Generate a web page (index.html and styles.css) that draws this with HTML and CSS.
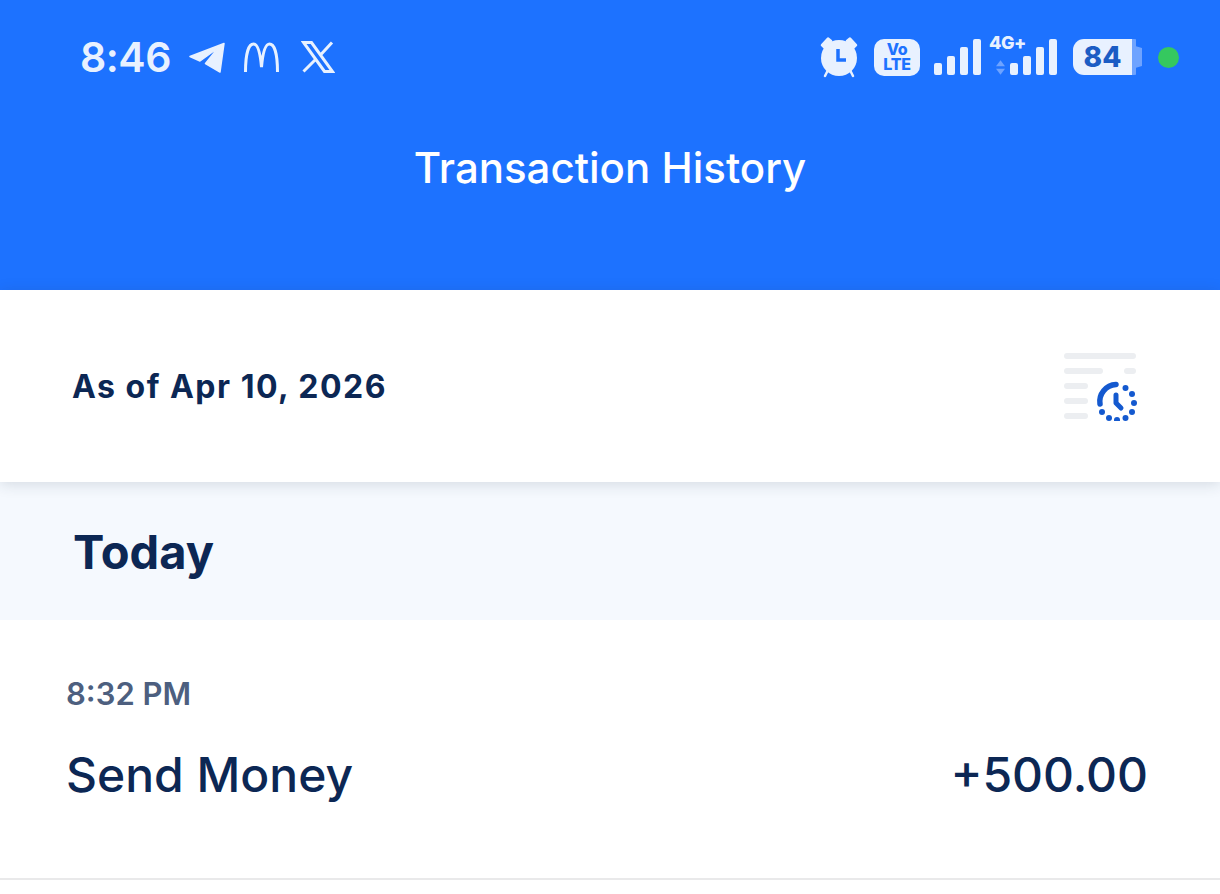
FILE: index.html
```
<!DOCTYPE html>
<html lang="en">
<head>
<meta charset="utf-8">
<title>Transaction History</title>
<link rel="stylesheet" href="styles.css">
</head>
<body>
<header class="header">
  <div class="status">
    <div class="status-left">
      <span class="clock">8:46</span>
      <svg class="ic-tg" viewBox="0 0 36 31"><path d="M35 1.500 1 14.500 11 19 29 6 16.500 21.500 31 30Z" fill="#e8f1ff" stroke="#e8f1ff" stroke-width="1.500" stroke-linejoin="round"/></svg>
      <svg class="ic-m" viewBox="0 0 36 30"><path d="M2 30C2 12 5 2 10 2 15 2 17 14 18 25 19 14 21 2 26 2 31 2 34 12 34 30" fill="none" stroke="#e8f1ff" stroke-width="3"/></svg>
      <svg class="ic-x" viewBox="0 0 34 32"><path d="M2.500 1.500H10.500L31.500 30.500H23.500ZM31 1.500 19 14.500M14.500 18.500 2.500 30.500" fill="none" stroke="#e8f1ff" stroke-width="3"/></svg>
    </div>
    <div class="status-right">
      <svg class="ic-alarm" viewBox="0 0 38 42"><path d="M2 9 8 2.500 11 5 5 12ZM36 9 30 2.500 27 5 33 12ZM8 34 5 40M30 34 33 40" fill="#e8f1ff" stroke="#e8f1ff" stroke-width="2.500" stroke-linecap="round" stroke-linejoin="round"/><circle cx="19" cy="22" r="18" fill="#e8f1ff"/><path d="M18 13V24H26" fill="none" stroke="#1d72ff" stroke-width="3.500"/></svg>
      <div class="volte"><span>Vo</span><span>LTE</span></div>
      <div class="bars bars-one"><i class="b1"></i><i class="b2"></i><i class="b3"></i><i class="b4"></i></div>
      <div class="net">
        <span class="net-label">4G+</span>
        <div class="net-row">
          <svg class="ic-updown" viewBox="0 0 10 16"><path d="M5 0 10 6.500H0Z" fill="#6ea3ff"/><path d="M5 16 10 9.500H0Z" fill="#6ea3ff"/></svg>
          <div class="bars"><i class="b1"></i><i class="b2"></i><i class="b3"></i><i class="b4"></i></div>
        </div>
      </div>
      <div class="battery"><span class="battery-body">84</span><span class="battery-cap"></span></div>
      <span class="dot"></span>
    </div>
  </div>
  <h1 class="title">Transaction History</h1>
</header>
<section class="asof">
  <span class="asof-text">As of Apr 10, 2026</span>
  <svg class="ic-hist" viewBox="0 0 74 68">
    <g fill="#eceef1">
      <rect x="0" y="0" width="72" height="6" rx="3"/>
      <rect x="0" y="15" width="39" height="6" rx="3"/>
      <rect x="60" y="15" width="12" height="6" rx="3"/>
      <rect x="0" y="30" width="24" height="6" rx="3"/>
      <rect x="0" y="45" width="24" height="6" rx="3"/>
      <rect x="0" y="60" width="24" height="6" rx="3"/>
    </g>
    <path d="M36 51A17 17 0 0 1 52 31.500" fill="none" stroke="#1459cf" stroke-width="5.500" stroke-linecap="round"/>
    <path d="M52 42V50L57 55" fill="none" stroke="#1459cf" stroke-width="5" stroke-linecap="round" stroke-linejoin="round"/>
    <g fill="#1459cf">
      <circle cx="61.500" cy="35" r="3"/><circle cx="68" cy="41" r="3"/><circle cx="70" cy="50" r="3"/><circle cx="68" cy="59" r="3"/><circle cx="61.500" cy="65" r="3"/><circle cx="53" cy="67" r="3"/><circle cx="45" cy="65" r="3"/><circle cx="38" cy="59" r="3"/>
    </g>
  </svg>
</section>
<section class="day"><h2 class="day-title">Today</h2></section>
<section class="txn">
  <div class="txn-time">8:32 PM</div>
  <div class="txn-main">
    <span class="txn-name">Send Money</span>
    <span class="txn-amount">+500.00</span>
  </div>
</section>
</body>
</html>
```
FILE: styles.css
```
* { box-sizing: border-box; }
html, body { margin: 0; padding: 0; }
body { background: #fff; font-family: Inter, "Noto Sans", sans-serif; color: #0c2754; height: 894px; overflow: hidden; }
.header { background: #1d72ff; height: 290px; padding-top: 34px; }
.status { display: flex; justify-content: space-between; align-items: center; height: 46px; padding: 0 41px 0 80px; color: #e8f1ff; }
.status-left, .status-right { display: flex; align-items: center; }
.clock { font-size: 41px; font-weight: 600; letter-spacing: -0.5px; margin-right: 18px; }
.ic-tg { width: 36px; height: 31px; margin-right: 18px; }
.ic-m { width: 37px; height: 30px; margin-right: 21px; }
.ic-x { width: 34px; height: 32px; }
.ic-alarm { width: 38px; height: 42px; margin-right: 16px; }
.volte { width: 46px; height: 37px; background: #e8f1ff; border-radius: 10px; color: #1d72ff; font-weight: 800; font-size: 16px; line-height: 15px; letter-spacing: -0.3px; display: flex; flex-direction: column; align-items: center; justify-content: center; margin-right: 14px; }
.bars { display: flex; align-items: flex-end; gap: 5px; height: 36px; }
.bars i { display: block; width: 8px; background: #e8f1ff; border-radius: 2px; }
.b1 { height: 12px; } .b2 { height: 19px; } .b3 { height: 28px; } .b4 { height: 36px; }
.status-right .bars { margin-top: 0; }
.bars-one { margin-right: 8px; }
.net { position: relative; width: 68px; height: 36px; margin-right: 16px; display: flex; align-items: flex-end; justify-content: flex-end; }
.net-label { position: absolute; left: 0; top: -6px; font-weight: 800; font-size: 18px; line-height: 20px; letter-spacing: -0.5px; background: #1d72ff; padding-right: 1px; }
.net-row { display: flex; align-items: flex-end; gap: 5px; }
.ic-updown { width: 9px; height: 15px; }
.battery { display: flex; align-items: center; margin-right: 16px; }
.battery-body { width: 59px; height: 36px; background: #e8f1ff; border-radius: 11px 0 0 11px; color: #1b5cc4; font-weight: 800; font-size: 28px; line-height: 36px; text-align: center; }
.battery-cap { width: 10px; height: 36px; background: #6ea3ff; border-radius: 0 8px 8px 0; clip-path: polygon(0 0, 40% 0, 40% 20%, 100% 25%, 100% 75%, 40% 80%, 40% 100%, 0 100%); }
.dot { width: 21px; height: 21px; border-radius: 50%; background: #35c85f; }
.title { margin: 60px 0 0; text-align: center; font-size: 42px; line-height: 56px; font-weight: 500; color: #fff; }
.asof { height: 192px; display: flex; justify-content: space-between; align-items: center; padding: 0 82px 0 72px; position: relative; z-index: 1; box-shadow: 0 2px 14px rgba(40, 50, 70, 0.16); background: #fff; }
.asof-text { font-size: 32px; font-weight: 700; letter-spacing: 1.5px; }
.ic-hist { width: 74px; height: 68px; margin-top: 2px; }
.day { height: 138px; background: #f5f9fe; padding: 0 73px; display: flex; align-items: center; }
.day-title { margin: 0; font-size: 47px; font-weight: 700; color: #0c2754; }
.txn { height: 260px; border-bottom: 2px solid #e9e9ea; padding: 54px 72px 0 66px; }
.txn-time { font-size: 31px; line-height: 40px; font-weight: 600; color: #4d5f7f; }
.txn-main { display: flex; justify-content: space-between; align-items: center; margin-top: 30px; font-size: 48px; line-height: 62px; font-weight: 500; }
```
